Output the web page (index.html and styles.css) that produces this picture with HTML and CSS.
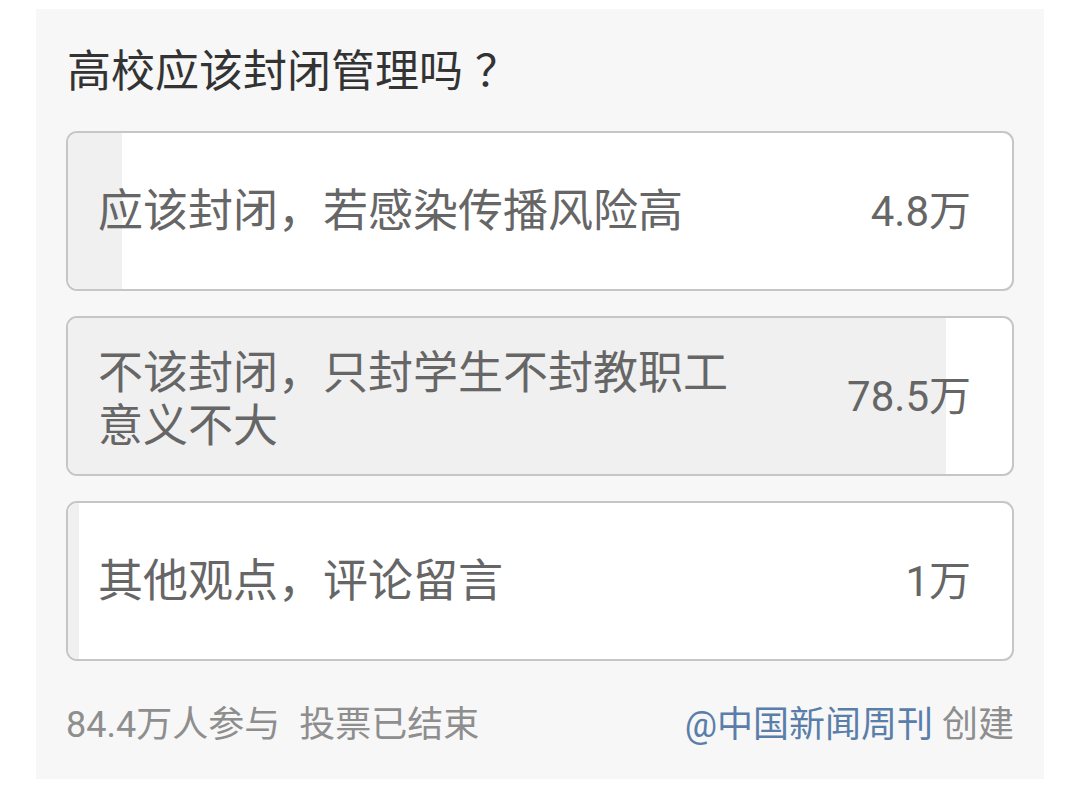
FILE: index.html
```html
<!DOCTYPE html>
<html lang="zh-CN">
<head>
<meta charset="utf-8">
<title>投票</title>
<link rel="stylesheet" href="styles.css">
</head>
<body>
<div class="card">
  <div class="title">高校应该封闭管理吗<span class="qmark">？</span></div>
  <div class="options">
    <div class="option">
      <div class="fill" style="width:5.7%"></div>
      <div class="label">应该封闭，若感染传播风险高</div>
      <div class="count">4.8万</div>
    </div>
    <div class="option">
      <div class="fill" style="width:93%"></div>
      <div class="label multi">不该封闭，只封学生不封教职工意义不大</div>
      <div class="count">78.5万</div>
    </div>
    <div class="option">
      <div class="fill" style="width:1.2%"></div>
      <div class="label">其他观点，评论留言</div>
      <div class="count">1万</div>
    </div>
  </div>
  <div class="footer">
    <div class="meta">84.4万人参与<span class="status">投票已结束</span></div>
    <div class="creator"><span class="author">@中国新闻周刊</span> 创建</div>
  </div>
</div>
</body>
</html>
```

FILE: styles.css
```css
html, body {
  margin: 0;
  padding: 0;
  background: #ffffff;
}
body {
  font-family: Roboto, "Noto Sans CJK SC", sans-serif;
  padding: 9px 36px 0 36px;
}
.card {
  background: #f7f7f7;
  padding: 32px 30px 27px 30px;
  height: 770px;
  box-sizing: border-box;
}
.title {
  font-size: 44px;
  line-height: 62px;
  height: 62px;
  color: #333333;
  padding-left: 1px;
}
.qmark {
  margin-left: 12px;
}
.options {
  margin-top: 28px;
  display: flex;
  flex-direction: column;
  gap: 25px;
}
.option {
  position: relative;
  height: 160px;
  box-sizing: border-box;
  border: 2px solid #c6c6c6;
  border-radius: 11px;
  background: #ffffff;
  overflow: hidden;
  display: flex;
  align-items: center;
  padding: 0 41px 0 30px;
}
.fill {
  position: absolute;
  left: 0;
  top: 0;
  bottom: 0;
  background: #f0f0f0;
}
.label {
  position: relative;
  flex: 1;
  max-width: 650px;
  font-size: 45px;
  line-height: 53px;
  color: #666666;
}
.label.multi {
  padding-top: 8px;
}
.count {
  position: relative;
  margin-left: auto;
  font-size: 42px;
  line-height: 53px;
  color: #666666;
  white-space: nowrap;
}
.footer {
  margin-top: 39px;
  display: flex;
  justify-content: space-between;
  align-items: center;
  font-size: 36px;
  line-height: 50px;
  color: #8e8e8e;
}
.status {
  margin-left: 19px;
}
.author {
  color: #5a7eaa;
}
```
